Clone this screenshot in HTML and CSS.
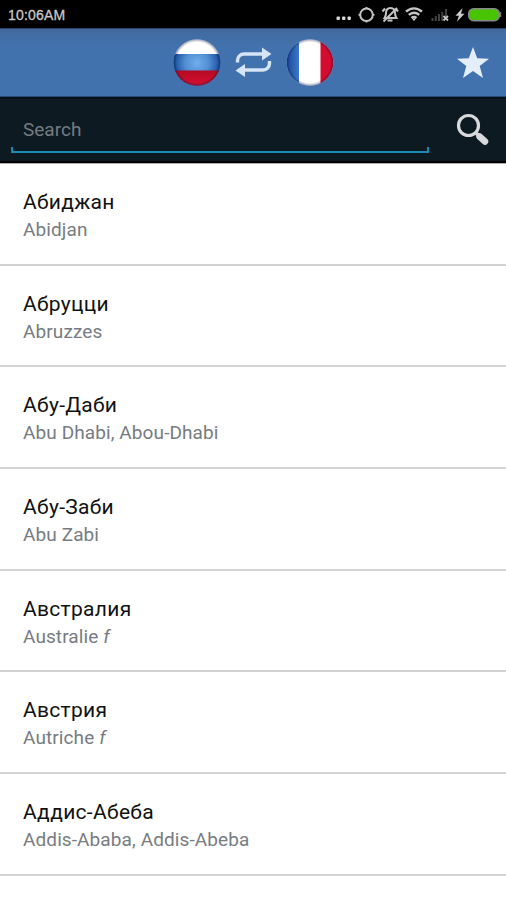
FILE: index.html
```html
<!DOCTYPE html>
<html lang="en">
<head>
<meta charset="utf-8">
<title>Dictionary</title>
<link rel="stylesheet" href="styles.css">
</head>
<body>
<div class="status">
  <span class="time">10:06AM</span>
  <svg class="status-icons" width="170" height="28" viewBox="0 0 170 28" fill="none" stroke="#c4c4c4">
    <g fill="#d8d8d8" stroke="none"><rect x="0.5" y="16.500" width="3.4" height="3.4" rx="1"/><rect x="6" y="16.500" width="3.4" height="3.4" rx="1"/><rect x="11.500" y="16.500" width="3.400" height="3.400" rx="1"/></g>
    <circle cx="30.500" cy="14.800" r="6.300" stroke-width="2"/>
    <path d="M30.500 7v2M30.500 20.500v2M22.500 14.800h2M36.500 14.800h2" stroke-width="1.800"/>
    <path d="M48.500 18c1-1.500 1.500-3 1.500-5 0-3 1.800-5 4.500-5s4.500 2 4.500 5c0 2 .5 3.500 1.500 5zM51.500 20.500h5M46.500 11.500l2.500-3M59.500 8.500l2.500 3" stroke-width="2"/>
    <path d="M47.500 21.500L61 8" stroke-width="2"/>
    <path d="M70 11.700c5-4.300 11-4.300 16 0M72.800 14.900c3.300-2.800 7-2.800 10.400 0M75.500 18c1.700-1.400 3.300-1.400 5 0" stroke-width="2.400"/>
    <path d="M76 18.500h4l-2 2.500z" fill="#d8d8d8" stroke="none"/>
    <path d="M96.500 18v3M99.800 16v5M103 14v7M106.300 12v9M110 9v8" stroke="#424242" stroke-width="2"/>
    <path d="M107.500 16l4.500 4.500M112 16l-4.500 4.500" stroke-width="1.800"/>
    <path d="M126.500 8l-7 7.800h3.400l-2 6 7.600-8h-3.500z" fill="#ccc" stroke="none"/>
    <rect x="132.700" y="8.700" width="30.600" height="12" rx="5" fill="#49c400" stroke="#88878b" stroke-width="1.500"/>
    <path d="M164.600 12v5" stroke="#777" stroke-width="1.200"/>
  </svg>
</div>
<header class="bar">
  <svg class="flag" width="48" height="48" viewBox="0 0 48 48">
    <defs>
      <clipPath id="disc"><circle cx="24" cy="23.500" r="23.300"/></clipPath>
      <radialGradient id="shade"><stop offset=".85" stop-color="#001040" stop-opacity="0"/><stop offset="1" stop-color="#001040" stop-opacity=".5"/></radialGradient>
      <radialGradient id="blueband" gradientUnits="userSpaceOnUse" cx="24" cy="24" r="24"><stop offset="0" stop-color="#70aeec"/><stop offset=".5" stop-color="#508dd3"/><stop offset="1" stop-color="#174a98"/></radialGradient>
      <linearGradient id="redband" x2="0" y2="1"><stop stop-color="#b60922"/><stop offset="1" stop-color="#d81234"/></linearGradient>
    </defs>
    <g clip-path="url(#disc)"><path fill="#fff" d="M0 0h48v16H0z"/><path fill="url(#blueband)" d="M0 15h48v17H0z"/><path fill="url(#redband)" d="M0 31.500h48v17H0z"/><circle cx="24" cy="23.500" r="24" fill="url(#shade)"/></g>
  </svg>
  <svg class="swap" width="37" height="31" viewBox="0 0 37 31">
    <path d="M2.500 15.500V13.500a6.500 6.500 0 0 1 6.500-6.500H28M34.500 14v2.500a6.500 6.500 0 0 1-6.500 6.500H9" fill="none" stroke="#d5e4f6" stroke-width="3.400"/>
    <path d="M27 .5L36.500 7 27 13.500zM10 17L.500 23.500 10 30z" fill="#d5e4f6"/>
  </svg>
  <svg class="flag" width="48" height="48" viewBox="0 0 48 48">
    <defs><linearGradient id="blueside"><stop stop-color="#164597"/><stop offset="1" stop-color="#3d79c9"/></linearGradient></defs>
    <g clip-path="url(#disc)"><path fill="#fff" d="M0 0h48v48H0z"/><path fill="url(#blueside)" d="M0 0h13v48H0z"/><path fill="#d30c30" d="M34.500 0H48v48H34.500z"/><circle cx="24" cy="23.500" r="24" fill="url(#shade)"/></g>
  </svg>
  <svg class="star" width="32" height="31" viewBox="0 0 32 31"><path d="M16 0l4.200 11.300 11.800.4-9.300 7.400L26 31l-10-7-10 7 3.300-11.900L0 11.700l11.800-.4z" fill="#e3eefa"/></svg>
</header>
<div class="search">
  <div class="field">Search</div>
  <svg class="glass" width="34" height="34" viewBox="0 0 34 34">
    <circle cx="12.500" cy="12.500" r="10" fill="none" stroke="#d8dadc" stroke-width="3.200"/>
    <path d="M19.500 19.500l4 4" stroke="#d8dadc" stroke-width="3.500"/>
    <path d="M23.500 23.500l5.500 5" stroke="#d8dadc" stroke-width="6.500" stroke-linecap="round"/>
  </svg>
</div>
<main class="list">
  <div class="row"><div class="word">Абиджан</div><div class="sense">Abidjan</div></div>
  <div class="row"><div class="word">Абруцци</div><div class="sense">Abruzzes</div></div>
  <div class="row"><div class="word">Абу-Даби</div><div class="sense">Abu Dhabi, Abou-Dhabi</div></div>
  <div class="row"><div class="word">Абу-Заби</div><div class="sense">Abu Zabi</div></div>
  <div class="row"><div class="word">Австралия</div><div class="sense">Australie <i>f</i></div></div>
  <div class="row"><div class="word">Австрия</div><div class="sense">Autriche <i>f</i></div></div>
  <div class="row"><div class="word">Аддис-Абеба</div><div class="sense">Addis-Ababa, Addis-Abeba</div></div>
</main>
</body>
</html>
```
FILE: styles.css
```css
* { box-sizing: border-box; }
body { margin: 0; width: 506px; height: 900px; overflow: hidden; background: #fff; font-family: Roboto, "Noto Sans", sans-serif; }
.status { height: 28px; background: #000; display: flex; justify-content: space-between; padding-left: 8px; }
.time { color: #c8c8c8; font: 14px/30px "Liberation Sans", sans-serif; letter-spacing: .2px; -webkit-text-stroke: .3px #c8c8c8; }
.status-icons { display: block; }
.bar { height: 69px; display: flex; align-items: center; padding: 0 17px 0 173px; background: linear-gradient(#426a9f, #4272ae 18px); border-top: 1px solid #24456f; border-bottom: 1px solid #264a75; }
.flag { flex: none; }
.swap { flex: none; margin: 0 14px; }
.star { margin-left: auto; }
.search { height: 66px; display: flex; align-items: flex-start; justify-content: space-between; padding: 15px 16px 0 11px; background: #0e1a22; border-top: 2px solid #080f17; border-bottom: 2px solid #000; }
.field { width: 418px; height: 39px; padding-left: 10px; color: #747b81; font-size: 19px; line-height: 32px; border: solid #198bb3; border-width: 0 2px 2px; border-image: linear-gradient(transparent 33px, #198bb3 33px) 2; }
.glass { flex: none; margin-top: -1px; }
.list { border-top: 1px solid #aaa; }
.row { height: 101.670px; padding: 24px 23px 0; border-bottom: 2px solid #d3d3d3; }
.word { color: #111; font-size: 21px; line-height: 28px; letter-spacing: .3px; }
.sense { color: #777c82; font-size: 19px; line-height: 27px; letter-spacing: .1px; }
```
